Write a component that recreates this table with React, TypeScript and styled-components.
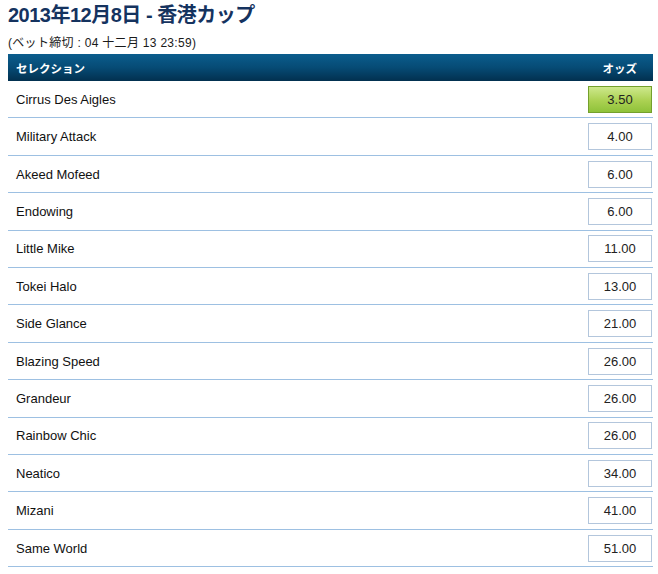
import React from "react";
import styled, { createGlobalStyle } from "styled-components";

const Global = createGlobalStyle`
  html, body { margin: 0; padding: 0; background: #fff; }
  body { font-family: "Liberation Sans", Arial, "Noto Sans CJK JP", sans-serif; }
`;

const Page = styled.div`
  padding: 0 5px 0 8px;
  width: 645px;
`;

const Title = styled.h1`
  margin: 0;
  padding-top: 3px;
  height: 28px;
  font-size: 20px;
  line-height: 24px;
  font-weight: bold;
  color: #15335f;
  letter-spacing: -0.5px;
`;

const Deadline = styled.div`
  font-size: 12px;
  line-height: 14px;
  color: #1a1a1a;
  padding-top: 5px;
  box-sizing: border-box;
  height: 23px;
  letter-spacing: 0.3px;
`;

const Table = styled.div`
  display: flex;
  flex-direction: column;
`;

const HeadRow = styled.div`
  display: flex;
  align-items: center;
  justify-content: space-between;
  height: 27px;
  padding: 0 16px 0 8px;
  background: linear-gradient(to bottom, #0b5d8d 0%, #064b75 50%, #02304f 100%);
  color: #fff;
  font-size: 11.5px;
  font-weight: bold;
`;

const Row = styled.div`
  display: flex;
  align-items: center;
  justify-content: space-between;
  height: 36.42px;
  border-bottom: 1px solid #9dc0e2;
  padding: 0 1px 0 8px;
`;

const Name = styled.span`
  font-size: 13px;
  color: #111;
`;

const Odds = styled.div<{ $fav?: boolean }>`
  width: 62px;
  height: 25px;
  display: flex;
  align-items: center;
  justify-content: center;
  font-size: 13px;
  color: #222;
  border: 1px solid ${(p) => (p.$fav ? "#74a02c" : "#b3c6dc")};
  background: ${(p) =>
    p.$fav ? "linear-gradient(to bottom, #cde88c 0%, #abd152 55%, #8fc23a 100%)" : "#fff"};
`;

const runners: [string, string][] = [
  ["Cirrus Des Aigles", "3.50"],
  ["Military Attack", "4.00"],
  ["Akeed Mofeed", "6.00"],
  ["Endowing", "6.00"],
  ["Little Mike", "11.00"],
  ["Tokei Halo", "13.00"],
  ["Side Glance", "21.00"],
  ["Blazing Speed", "26.00"],
  ["Grandeur", "26.00"],
  ["Rainbow Chic", "26.00"],
  ["Neatico", "34.00"],
  ["Mizani", "41.00"],
  ["Same World", "51.00"],
];

export default function App() {
  return (
    <>
      <Global />
      <Page>
        <Title>2013年12月8日 - 香港カップ</Title>
        <Deadline>(ベット締切 : 04 十二月 13 23:59)</Deadline>
        <Table>
          <HeadRow>
            <span>セレクション</span>
            <span>オッズ</span>
          </HeadRow>
          {runners.map(([n, o], i) => (
            <Row key={n}>
              <Name>{n}</Name>
              <Odds $fav={i === 0}>{o}</Odds>
            </Row>
          ))}
        </Table>
      </Page>
    </>
  );
}
